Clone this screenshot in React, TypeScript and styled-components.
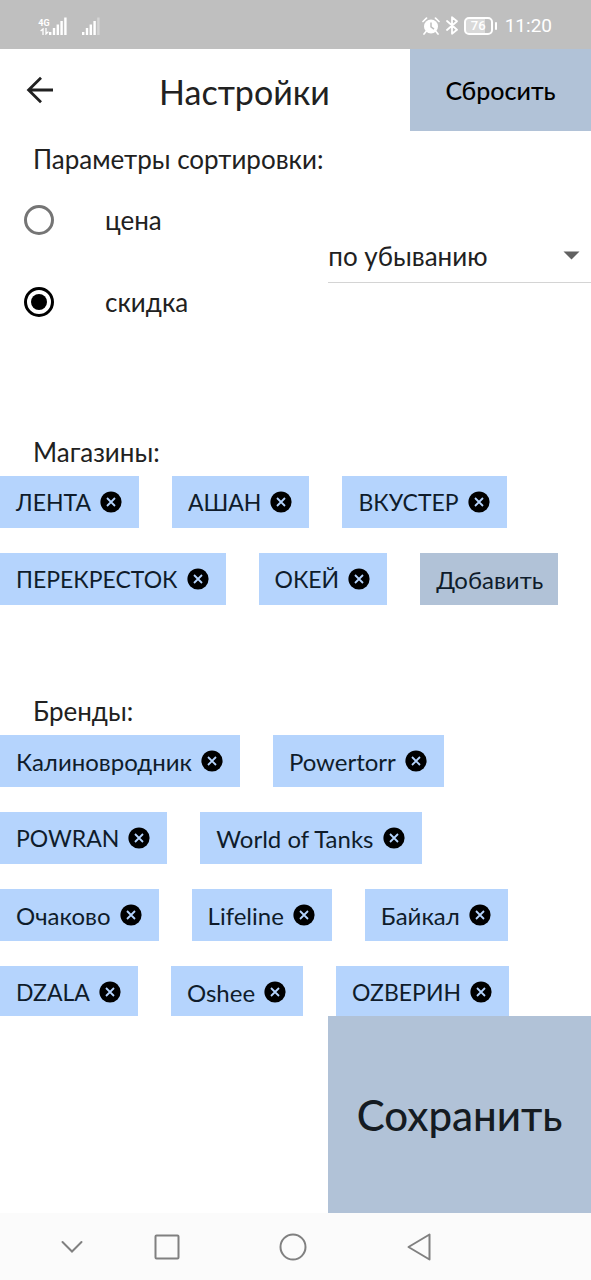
import React, { useState } from "react";
import styled, { createGlobalStyle } from "styled-components";

const color = {
  chip: "#b5d4fd",
  action: "#b1c2d7",
  ink: "#212121",
  chipInk: "#0f1c2b",
  status: "#bfbfbf",
  nav: "#fbfbfb",
};

const GlobalStyle = createGlobalStyle`
  *, *::before, *::after { box-sizing: border-box; }
  body { margin: 0; background: #fff; }
  button, input, select { font: inherit; color: inherit; margin: 0; }
  button { border: 0; padding: 0; background: none; cursor: pointer; }
`;

const Screen = styled.div`
  display: flex;
  flex-direction: column;
  height: 100vh;
  color: ${color.ink};
  font-family: Lato, "Noto Sans", sans-serif;
  font-size: 26px;
`;

const StatusBar = styled.div`
  display: flex;
  align-items: center;
  justify-content: space-between;
  flex: none;
  height: 49px;
  padding: 2px 39px 0;
  background: ${color.status};
  color: #fff;
`;

const StatusGroup = styled.div<{ $gap: number }>`
  display: flex;
  align-items: center;
  gap: ${(p) => p.$gap}px;
`;

const Signal = styled.div`
  display: flex;
  align-items: flex-end;
  svg { display: block; }
`;

const Network = styled.div`
  display: flex;
  flex-direction: column;
  align-items: center;
  width: 10px;
  font: 700 9px/9px Roboto, sans-serif;
`;

const Battery = styled.div`
  display: flex;
  align-items: center;
  gap: 2px;
  &::after {
    content: "";
    width: 2px;
    height: 8px;
    border-radius: 1px;
    background: #fff;
  }
`;

const BatteryLevel = styled.span`
  width: 29px;
  height: 18px;
  border: 2px solid #fff;
  border-radius: 5px;
  background: linear-gradient(90deg, #d9d9d9 76%, transparent 76%);
  font: 500 13px/14px Roboto, sans-serif;
  text-align: center;
`;

const Clock = styled.time`
  margin-left: 2px;
  font: 400 19px/24px Roboto, sans-serif;
`;

const Header = styled.header`
  display: flex;
  align-items: stretch;
  flex: none;
  height: 82px;
`;

const BackButton = styled.button`
  display: grid;
  place-items: center;
  width: 79px;
`;

const Title = styled.h1`
  flex: 1;
  margin: 0;
  font-size: 34px;
  font-weight: 400;
  line-height: 86px;
  text-align: center;
`;

const ResetButton = styled.button`
  width: 181px;
  background: ${color.action};
  color: #000;
  font-size: 25px;
  font-weight: 500;
`;

const Content = styled.main`
  flex: 1;
  min-height: 0;
  overflow: hidden;
  padding-top: 8px;
`;

const Section = styled.section`
  margin-bottom: 86px;
`;

const Heading = styled.h2`
  margin: 0;
  padding: 0 33px;
  font-size: 26px;
  font-weight: 400;
  line-height: 40px;
`;

const SortGrid = styled.div`
  display: grid;
  grid-template-columns: 5fr 4fr;
  align-items: center;
  padding-bottom: 3px;
`;

const RadioRow = styled.label`
  display: flex;
  align-items: center;
  gap: 51px;
  height: 82px;
  padding-left: 24px;
`;

const Radio = styled.input`
  appearance: none;
  display: grid;
  place-items: center;
  width: 30px;
  height: 30px;
  border: 3px solid #757575;
  border-radius: 50%;
  &:checked { border-color: #000; }
  &:checked::before {
    content: "";
    width: 16px;
    height: 16px;
    border-radius: 50%;
    background: #000;
  }
`;

const SelectBox = styled.div`
  display: grid;
  align-items: center;
  padding-bottom: 10px;
  border-bottom: 1px solid #d4d4d4;
  > * { grid-area: 1 / 1; }
  svg {
    justify-self: end;
    margin-right: 11px;
    pointer-events: none;
  }
`;

const Select = styled.select`
  appearance: none;
  width: 100%;
  height: 32px;
  padding: 0;
  border: 0;
  background: transparent;
`;

const ChipList = styled.ul`
  display: flex;
  flex-wrap: wrap;
  gap: 25px 33px;
  margin: 4px 0 0;
  padding: 0;
  list-style: none;
  color: ${color.chipInk};
  font-size: 24px;
`;

const Chip = styled.li<{ $caps: boolean }>`
  display: flex;
  align-items: center;
  gap: 9px;
  height: 52px;
  padding: 0 17px 0 16px;
  background: ${color.chip};
  font-size: ${(p) => (p.$caps ? 23 : 24)}px;
`;

const RemoveButton = styled.button`
  svg { display: block; }
`;

const AddButton = styled.button`
  height: 52px;
  padding: 0 15px 0 16px;
  background: ${color.action};
`;

const Footer = styled.footer`
  display: grid;
  grid-template-columns: 5fr 4fr;
  flex: none;
`;

const SaveButton = styled.button`
  grid-column: 2;
  height: 197px;
  background: ${color.action};
  color: #151b22;
  font-size: 42px;
  font-weight: 500;
`;

const NavBar = styled.nav`
  display: grid;
  grid-template-columns: 8fr 8fr 13fr 8fr;
  flex: none;
  height: 67px;
  padding: 0 21% 0 4%;
  background: ${color.nav};
`;

const NavButton = styled.button`
  display: grid;
  place-items: center;
`;

const CloseIcon = () => (
  <svg width="22" height="22" viewBox="0 0 22 22" aria-hidden="true">
    <circle cx="11" cy="11" r="10.6" fill="#000" />
    <path d="M7 7l8 8M15 7l-8 8" stroke={color.chip} strokeWidth="1.8" />
  </svg>
);

const Bars = ({ dimLast = false }: { dimLast?: boolean }) => (
  <svg width="18" height="18" viewBox="0 0 18 18" fill="#fff" aria-hidden="true">
    <rect x="0" y="15" width="2.4" height="3" />
    <rect x="3.8" y="11" width="2.4" height="7" />
    <rect x="7.6" y="7.5" width="2.4" height="10.5" />
    <rect x="11.4" y="4" width="2.4" height="14" />
    <rect x="15.2" y="0.5" width="2.4" height="17.5" opacity={dimLast ? 0.35 : 1} />
  </svg>
);

const AlarmIcon = () => (
  <svg width="18" height="18" viewBox="0 0 18 18" fill="none" aria-hidden="true">
    <circle cx="9" cy="9.5" r="7" fill="#fff" />
    <path d="M9 5.5v4.3l3 2.3" stroke={color.status} strokeWidth="1.5" />
    <path d="M1 4.5L4.5 1.2M13.5 1.2L17 4.5M4 14.5L2 17M14 14.5l2 2.5" stroke="#fff" strokeWidth="1.7" strokeLinecap="round" />
  </svg>
);

const BluetoothIcon = () => (
  <svg width="12" height="19" viewBox="0 0 12 19" fill="none" stroke="#fff" strokeWidth="1.8" aria-hidden="true">
    <path d="M1 5l10 8.8-5 4V1.2l5 4L1 14" strokeLinejoin="round" strokeLinecap="round" />
  </svg>
);

const ArrowsIcon = () => (
  <svg width="9" height="7" viewBox="0 0 9 7" fill="none" stroke="#fff" strokeWidth="1.3" aria-hidden="true">
    <path d="M3 7V1L.6 3M6 0v6l2.4-2.4" />
  </svg>
);

const shopNames = ["ЛЕНТА", "АШАН", "ВКУСТЕР", "ПЕРЕКРЕСТОК", "ОКЕЙ"];
const brandNames = [
  "Калиновродник",
  "Powertorr",
  "POWRAN",
  "World of Tanks",
  "Очаково",
  "Lifeline",
  "Байкал",
  "DZALA",
  "Oshee",
  "OZВЕРИН",
];

type ChipsProps = { items: string[]; onRemove: (name: string) => void; children?: React.ReactNode };

const Chips = ({ items, onRemove, children }: ChipsProps) => (
  <ChipList>
    {items.map((name) => (
      <Chip key={name} $caps={name === name.toUpperCase()}>
        {name}
        <RemoveButton type="button" aria-label={`Удалить ${name}`} onClick={() => onRemove(name)}>
          <CloseIcon />
        </RemoveButton>
      </Chip>
    ))}
    {children}
  </ChipList>
);

export default function App() {
  const [sortBy, setSortBy] = useState("скидка");
  const [shops, setShops] = useState(shopNames);
  const [brands, setBrands] = useState(brandNames);

  const reset = () => {
    setSortBy("скидка");
    setShops(shopNames);
    setBrands(brandNames);
  };

  return (
    <Screen>
      <GlobalStyle />
      <StatusBar>
        <StatusGroup $gap={15}>
          <Signal>
            <Network>
              4G
              <ArrowsIcon />
            </Network>
            <Bars />
          </Signal>
          <Bars dimLast />
        </StatusGroup>
        <StatusGroup $gap={6}>
          <AlarmIcon />
          <BluetoothIcon />
          <Battery>
            <BatteryLevel>76</BatteryLevel>
          </Battery>
          <Clock>11:20</Clock>
        </StatusGroup>
      </StatusBar>

      <Header>
        <BackButton type="button" aria-label="Назад">
          <svg width="28" height="28" viewBox="0 0 28 28" fill="none" stroke={color.ink} strokeWidth="2.8" aria-hidden="true">
            <path d="M27 14H3M15 1.8L2.6 14 15 26.2" />
          </svg>
        </BackButton>
        <Title>Настройки</Title>
        <ResetButton type="button" onClick={reset}>
          Сбросить
        </ResetButton>
      </Header>

      <Content>
        <Section>
          <Heading id="sort-heading">Параметры сортировки:</Heading>
          <SortGrid>
            <div role="radiogroup" aria-labelledby="sort-heading">
              {["цена", "скидка"].map((name) => (
                <RadioRow key={name}>
                  <Radio type="radio" name="sort" checked={sortBy === name} onChange={() => setSortBy(name)} />
                  {name}
                </RadioRow>
              ))}
            </div>
            <SelectBox>
              <Select aria-label="Порядок сортировки" defaultValue="desc">
                <option value="desc">по убыванию</option>
                <option value="asc">по возрастанию</option>
              </Select>
              <svg width="17" height="9" viewBox="0 0 17 9" aria-hidden="true">
                <path d="M0.5 0.5h16l-8 8z" fill="#616161" />
              </svg>
            </SelectBox>
          </SortGrid>
        </Section>

        <Section>
          <Heading>Магазины:</Heading>
          <Chips items={shops} onRemove={(n) => setShops(shops.filter((s) => s !== n))}>
            <li>
              <AddButton type="button">Добавить</AddButton>
            </li>
          </Chips>
        </Section>

        <Section>
          <Heading>Бренды:</Heading>
          <Chips items={brands} onRemove={(n) => setBrands(brands.filter((b) => b !== n))} />
        </Section>
      </Content>

      <Footer>
        <SaveButton type="button">Сохранить</SaveButton>
      </Footer>

      <NavBar aria-label="Системная навигация">
        <NavButton type="button" aria-label="Скрыть">
          <svg width="24" height="24" viewBox="0 0 24 24" fill="none" stroke="#808080" strokeWidth="2" strokeLinecap="round">
            <path d="M2.5 7L12 16.5 21.5 7" />
          </svg>
        </NavButton>
        <NavButton type="button" aria-label="Недавние">
          <svg width="26" height="26" viewBox="0 0 26 26" fill="none" stroke="#808080" strokeWidth="2">
            <rect x="1.5" y="1.5" width="23" height="23" rx="1" />
          </svg>
        </NavButton>
        <NavButton type="button" aria-label="Домой">
          <svg width="28" height="28" viewBox="0 0 28 28" fill="none" stroke="#808080" strokeWidth="2">
            <circle cx="14" cy="14" r="12.5" />
          </svg>
        </NavButton>
        <NavButton type="button" aria-label="Назад к предыдущему">
          <svg width="24" height="28" viewBox="0 0 24 28" fill="none" stroke="#808080" strokeWidth="2" strokeLinejoin="round">
            <path d="M22.5 1.5v25L1.5 14z" />
          </svg>
        </NavButton>
      </NavBar>
    </Screen>
  );
}
